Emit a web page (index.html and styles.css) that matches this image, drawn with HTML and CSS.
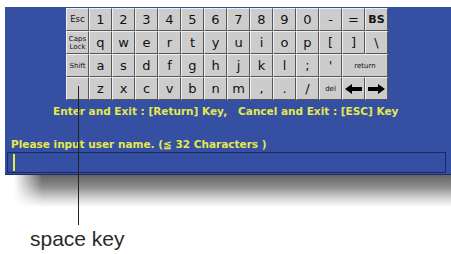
FILE: index.html
```html
<!DOCTYPE html>
<html>
<head>
<meta charset="utf-8">
<link rel="stylesheet" href="styles.css">
</head>
<body>
<div class="page">
  <div class="panel">
    <div class="kbd">
      <div class="k sm">Esc</div><div class="k">1</div><div class="k">2</div><div class="k">3</div><div class="k">4</div><div class="k">5</div><div class="k">6</div><div class="k">7</div><div class="k">8</div><div class="k">9</div><div class="k">0</div><div class="k">-</div><div class="k">=</div><div class="k bs">BS</div>
      <div class="k xs">Caps<br>Lock</div><div class="k">q</div><div class="k">w</div><div class="k">e</div><div class="k">r</div><div class="k">t</div><div class="k">y</div><div class="k">u</div><div class="k">i</div><div class="k">o</div><div class="k">p</div><div class="k">[</div><div class="k">]</div><div class="k">\</div>
      <div class="k xs">Shift</div><div class="k">a</div><div class="k">s</div><div class="k">d</div><div class="k">f</div><div class="k">g</div><div class="k">h</div><div class="k">j</div><div class="k">k</div><div class="k">l</div><div class="k">;</div><div class="k">'</div><div class="k xs wide">return</div>
      <div class="k"></div><div class="k">z</div><div class="k">x</div><div class="k">c</div><div class="k">v</div><div class="k">b</div><div class="k">n</div><div class="k">m</div><div class="k">,</div><div class="k">.</div><div class="k">/</div><div class="k xs">del</div>
      <div class="k"><svg width="17" height="10" viewBox="0 0 17 10"><polygon points="0,5 7,0 7,3 17,3 17,7 7,7 7,10" fill="#000"/></svg></div>
      <div class="k"><svg width="17" height="10" viewBox="0 0 17 10"><polygon points="17,5 10,0 10,3 0,3 0,7 10,7 10,10" fill="#000"/></svg></div>
    </div>
    <div class="hint">Enter and Exit : [Return] Key,&nbsp;&nbsp; Cancel and Exit : [ESC] Key</div>
    <div class="prompt">Please input user name. (≦ 32 Characters )</div>
    <div class="input"><span class="caret"></span></div>
  </div>
  <div class="shadow"></div>
  <div class="label">space key</div>
  <div class="pointer"></div>
</div>
</body>
</html>
```
FILE: styles.css
```css
html, body {
  margin: 0;
  padding: 0;
  background: #fff;
}
.page {
  position: relative;
  width: 451px;
  height: 254px;
  overflow: hidden;
  padding-top: 7px;
  box-sizing: border-box;
}
.panel {
  margin-left: 5px;
  width: 450px;
  height: 168px;
  background: #3550a3;
  border-bottom: 1px solid #1e2c60;
  box-sizing: border-box;
  padding-top: 1px;
}
.kbd {
  margin-left: 61px;
  width: 322px;
  display: grid;
  grid-template-columns: repeat(14, 23px);
  grid-auto-rows: 23px;
  background: #4a4a4a;
}
.k {
  box-sizing: border-box;
  background: #cccccc;
  border-top: 1px solid #f0f0f0;
  border-left: 1px solid #f0f0f0;
  border-right: 1px solid #555;
  border-bottom: 1px solid #555;
  display: flex;
  align-items: center;
  justify-content: center;
  font-family: "DejaVu Sans", sans-serif;
  font-size: 13px;
  color: #111;
  line-height: 1;
}
.k.sm { font-size: 8.5px; }
.k.xs { font-size: 7px; line-height: 8px; text-align: center; }
.k.bs { font-size: 11px; font-weight: bold; }
.k.wide { grid-column: span 2; }
.hint {
  margin-top: 4px;
  margin-left: 48px;
  height: 14px;
  line-height: 14px;
  font-family: "DejaVu Sans", sans-serif;
  font-weight: bold;
  font-size: 10.5px;
  color: #e6e84c;
  white-space: nowrap;
}
.prompt {
  margin-top: 19px;
  margin-left: 6px;
  height: 14px;
  line-height: 14px;
  font-family: "DejaVu Sans", sans-serif;
  font-weight: bold;
  font-size: 10.5px;
  color: #e6e84c;
  white-space: nowrap;
}
.input {
  margin-top: 1px;
  margin-left: 2px;
  width: 439px;
  height: 21px;
  box-sizing: border-box;
  border: 1px solid #1c2a62;
  padding: 1px 0 0 5px;
}
.caret {
  display: block;
  width: 2px;
  height: 17px;
  background: #e6e84c;
}
.shadow {
  margin-left: 14px;
  height: 32px;
  background: linear-gradient(#646464 0%, #8a8a8a 35%, #d8d8d8 75%, #ffffff 100%);
  -webkit-mask-image: linear-gradient(to right, transparent 0, #000 28px);
  mask-image: linear-gradient(to right, transparent 0, #000 28px);
}
.label {
  margin-top: 21px;
  margin-left: 30px;
  font-family: "Liberation Sans", Arial, sans-serif;
  font-size: 21px;
  line-height: 22px;
  color: #2a2a2a;
}
.pointer {
  position: absolute;
  left: 78px;
  top: 86px;
  width: 1px;
  height: 139px;
  background: #222;
}
```
